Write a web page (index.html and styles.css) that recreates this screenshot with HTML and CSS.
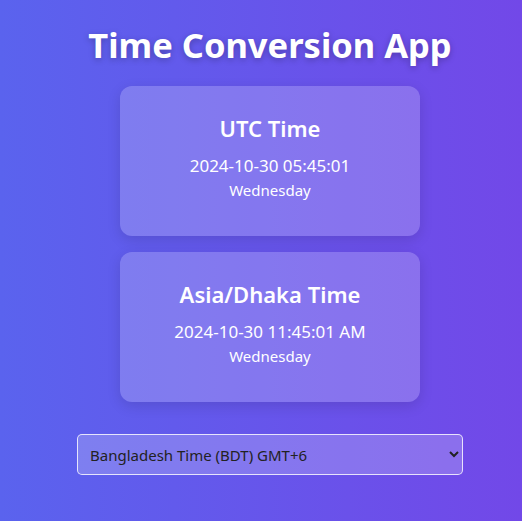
FILE: index.html
```html
<!DOCTYPE html>
<html lang="en">
<head>
<meta charset="utf-8">
<title>Time Conversion App</title>
<link rel="stylesheet" href="styles.css">
</head>
<body>
<div class="app">
  <h1 class="title">Time Conversion App</h1>
  <div class="card">
    <h2 class="card-title">UTC Time</h2>
    <p class="card-time">2024-10-30 05:45:01</p>
    <p class="card-day">Wednesday</p>
  </div>
  <div class="card">
    <h2 class="card-title">Asia/Dhaka Time</h2>
    <p class="card-time">2024-10-30 11:45:01 AM</p>
    <p class="card-day">Wednesday</p>
  </div>
  <select class="zone-select">
    <option>Bangladesh Time (BDT) GMT+6</option>
  </select>
</div>
</body>
</html>
```
FILE: styles.css
```css
* { box-sizing: border-box; }
html, body { height: 100%; }
body {
  margin: 0;
  font-family: "Noto Sans", "Open Sans", sans-serif;
  background: linear-gradient(to right, #5a63ee, #7248e8);
  color: #fff;
}
.app {
  display: flex;
  flex-direction: column;
  align-items: center;
  padding-top: 22px;
  padding-left: 18px;
}
.title {
  margin: 0 0 18px;
  font-size: 34.5px;
  line-height: 46px;
  font-weight: 700;
  text-shadow: 0 2px 6px rgba(0,0,0,0.25);
}
.card {
  width: 300px;
  height: 150px;
  margin-bottom: 16px;
  padding-top: 28px;
  border-radius: 12px;
  background: rgba(255,255,255,0.2);
  box-shadow: 0 4px 14px rgba(0,0,0,0.12);
  text-align: center;
}
.card-title {
  margin: 0 0 12px;
  font-size: 22px;
  line-height: 28px;
  font-weight: 600;
}
.card-time {
  margin: 0 0 2px;
  font-size: 17px;
  line-height: 24px;
}
.card-day {
  margin: 0;
  font-size: 15px;
  line-height: 20px;
}
.zone-select {
  margin-top: 16px;
  width: 386px;
  height: 41px;
  padding: 0 8px;
  font-family: inherit;
  font-size: 15px;
  color: #222;
  background: rgba(255,255,255,0.2);
  border: 1px solid rgba(255,255,255,0.8);
  border-radius: 5px;
}
```
